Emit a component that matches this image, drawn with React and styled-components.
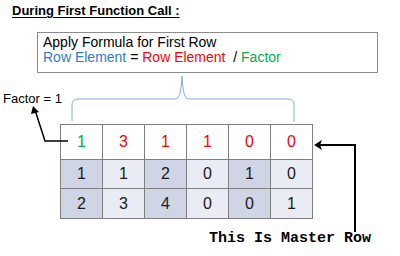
import React from 'react'
import styled, { createGlobalStyle } from 'styled-components'

const GlobalStyle = createGlobalStyle`
body {
  margin: 0;
  background: #ffffff;
}
`

const Page = styled.div`
position: relative;
width: 400px;
height: 256px;
overflow: hidden;
font-family: 'Liberation Sans', Arial, sans-serif;
color: #000;
`
const Title = styled.h1`
margin: 0;
padding: 3px 0 0 12px;
font-size: 13px;
font-weight: 700;
line-height: 16px;
text-decoration: underline;
text-underline-offset: 2px;
`
const FormulaBox = styled.div`
margin: 13px 0 0 37px;
width: 341px;
height: 41px;
box-sizing: border-box;
border: 1px solid #8c8c8c;
padding: 2px 0 0 5px;
font-size: 14px;
line-height: 15px;
white-space: pre;
`
const Part = styled.span`
color: ${p => p.color || '#000'};
`
const Grid = styled.table`
margin: 51px 0 0 60px;
border-collapse: collapse;
font-size: 16px;
`
const Row = styled.tr`
height: ${p => p.h}px;
`
const Cell = styled.td`
width: 41px;
padding: 0;
text-align: center;
border: 1px solid #7f7f7f;
background: ${p => p.shade === 'dark' ? '#cfd5e4' : p.shade === 'light' ? '#e9ecf4' : '#ffffff'};
color: ${p => p.color || '#1a1a1a'};
`
const Note = styled.div`
position: absolute;
left: ${p => p.x}px;
top: ${p => p.y}px;
font-size: 13px;
white-space: nowrap;
`
const MonoNote = styled(Note)`
font-family: 'Liberation Mono', 'Courier New', monospace;
font-size: 15px;
font-weight: 700;
`
const Overlay = styled.svg`
position: absolute;
left: 0;
top: 0;
pointer-events: none;
`

const GREEN = '#00b050'
const RED = '#ff0000'

const MASTER = [1, 3, 1, 1, 0, 0]
const ROWS = [
  [1, 1, 2, 0, 1, 0],
  [2, 3, 4, 0, 0, 1]
]

export default function App() {
  return (
    <>
      <GlobalStyle />
      <Page>
        <Title>During First Function Call :</Title>
        <FormulaBox>
          <div>Apply Formula for First Row</div>
          <div><Part color="#2f7bd4">Row Element</Part> = <Part color={RED}>Row Element</Part>  / <Part color={GREEN}>Factor</Part></div>
        </FormulaBox>
        <Grid>
          <tbody>
            <Row h={35}>
              {MASTER.map((n, i) => (
                <Cell key={i} color={i === 0 ? GREEN : RED}>{n}</Cell>
              ))}
            </Row>
            {ROWS.map((r, ri) => (
              <Row key={ri} h={ri === 0 ? 29 : 30}>
                {r.map((n, i) => (
                  <Cell key={i} shade={i % 2 === 0 ? 'dark' : 'light'}>{n}</Cell>
                ))}
              </Row>
            ))}
          </tbody>
        </Grid>
        <Note x={3} y={91}>Factor = 1</Note>
        <MonoNote x={209} y={230}>This Is Master Row</MonoNote>
        <Overlay width="400" height="256" viewBox="0 0 400 256">
          <path d="M72 121 V105 Q72 99 78 99 H176 Q181 99 182 76 Q183 99 188 99 H288 Q294 99 294 105 V122"
            fill="none" stroke="#8eaadb" strokeWidth="1" />
          <polyline points="68,141 45,141 35,110" fill="none" stroke="#000" strokeWidth="1.5" />
          <path d="M33 106 L31 114 L39 112 Z" fill="#000" />
          <polyline points="318,145 355,145 355,232" fill="none" stroke="#000" strokeWidth="2" />
          <path d="M314 145 L322 140 L320 145 L322 150 Z" fill="#000" />
        </Overlay>
      </Page>
    </>
  )
}
